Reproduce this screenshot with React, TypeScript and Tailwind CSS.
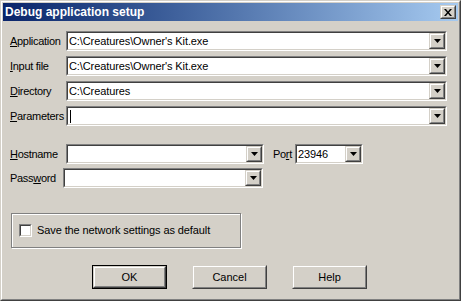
import React from 'react';

const raised =
  'border border-t-[#d4d0c8] border-l-[#d4d0c8] border-r-[#404040] border-b-[#404040]';
const raisedInner =
  'border border-t-white border-l-white border-r-[#808080] border-b-[#808080]';
const sunken =
  'border border-t-[#808080] border-l-[#808080] border-r-white border-b-white';
const sunkenInner =
  'border border-t-[#404040] border-l-[#404040] border-r-[#d4d0c8] border-b-[#d4d0c8]';

const DropButton: React.FC = () => (
  <div className={`w-[16px] h-full bg-[#d4d0c8] ${raised}`}>
    <div className={`w-full h-full flex items-center justify-center ${raisedInner}`}>
      <svg width="7" height="4" viewBox="0 0 7 4" className="block">
        <polygon points="0,0 7,0 3.5,4" fill="#000" />
      </svg>
    </div>
  </div>
);

interface ComboProps {
  value?: string;
  className?: string;
  caret?: boolean;
}

const Combo: React.FC<ComboProps> = ({ value = '', className = 'flex-1', caret = false }) => (
  <div className={`h-[20px] ${sunken} ${className}`}>
    <div className={`h-full flex bg-white ${sunkenInner}`}>
      <div className="flex-1 flex items-center pl-[1px] text-black whitespace-nowrap overflow-hidden tracking-[-0.1px]">
        {caret && <span className="inline-block w-[1px] h-[13px] bg-black ml-[1px]" />}
        {value}
      </div>
      <DropButton />
    </div>
  </div>
);

const Label: React.FC<{ pre?: string; u: string; post: string; className: string }> = ({
  pre = '',
  u,
  post,
  className,
}) => (
  <span className={`whitespace-nowrap tracking-[-0.3px] ${className}`}>
    {pre}
    <u className="underline-offset-[1px]">{u}</u>
    {post}
  </span>
);

const Button: React.FC<{ label: string; isDefault?: boolean }> = ({ label, isDefault }) => (
  <div className={`w-[75px] h-[24px] ${isDefault ? 'border border-black' : ''}`}>
    <div className={`w-full h-full bg-[#d4d0c8] ${raised}`}>
      <div className={`w-full h-full flex items-center justify-center text-black ${raisedInner}`}>
        {label}
      </div>
    </div>
  </div>
);

export default function App() {
  return (
    <div className="w-[461px] h-[301px] bg-[#d4d0c8] font-['Liberation_Sans',Arial,sans-serif] text-[11px] text-black">
      <div className={`w-full h-full ${raised}`}>
        <div className={`w-full h-full p-[1px] flex flex-col ${raisedInner}`}>
          {/* title bar */}
          <div className="h-[18px] flex items-center pl-[2px] pr-[2px] bg-gradient-to-r from-[#0a246a] to-[#a6caf0]">
            <span className="flex-1 text-white font-bold text-[12px]">Debug application setup</span>
            <div className={`w-[16px] h-[14px] bg-[#d4d0c8] ${raised}`}>
              <div className={`w-full h-full flex items-center justify-center ${raisedInner}`}>
                <svg width="8" height="7" viewBox="0 0 8 7" className="block">
                  <path d="M0,0 L2,0 L4,2.5 L6,0 L8,0 L5,3.5 L8,7 L6,7 L4,4.5 L2,7 L0,7 L3,3.5 Z" fill="#000" />
                </svg>
              </div>
            </div>
          </div>

          <div className="flex flex-col pl-[7px] pr-[11px]">
            <div className="flex flex-col gap-[5px] mt-[10px]">
              <div className="flex items-center">
                <Label u="A" post="pplication" className="w-[56px]" />
                <Combo value="C:\Creatures\Owner's Kit.exe" />
              </div>
              <div className="flex items-center">
                <Label u="I" post="nput file" className="w-[56px]" />
                <Combo value="C:\Creatures\Owner's Kit.exe" />
              </div>
              <div className="flex items-center">
                <Label u="D" post="irectory" className="w-[56px]" />
                <Combo value="C:\Creatures" />
              </div>
              <div className="flex items-center">
                <Label u="P" post="arameters" className="w-[56px]" />
                <Combo caret />
              </div>
            </div>

            <div className="flex items-center mt-[18px]">
              <Label u="H" post="ostname" className="w-[56px]" />
              <Combo className="w-[198px]" />
              <Label pre="Po" u="r" post="t" className="ml-[9px] w-[22px]" />
              <Combo value="23946" className="w-[68px]" />
            </div>
            <div className="flex items-center mt-[4px]">
              <Label pre="Pass" u="w" post="ord" className="w-[53px]" />
              <Combo className="w-[200px]" />
            </div>

            <div className="mt-[25px] ml-[1px] w-[230px] h-[35px] flex items-center gap-[5px] pl-[7px] border border-[#808080] shadow-[inset_1px_1px_0_white,1px_1px_0_white]">
              <div className={`w-[13px] h-[13px] ${sunken}`}>
                <div className={`w-full h-full bg-white ${sunkenInner}`} />
              </div>
              <span className="tracking-[-0.1px]">Save the network settings as default</span>
            </div>

            <div className="flex gap-[25px] mt-[17px] pl-[82px]">
              <Button label="OK" isDefault />
              <Button label="Cancel" />
              <Button label="Help" />
            </div>
          </div>
        </div>
      </div>
    </div>
  );
}
